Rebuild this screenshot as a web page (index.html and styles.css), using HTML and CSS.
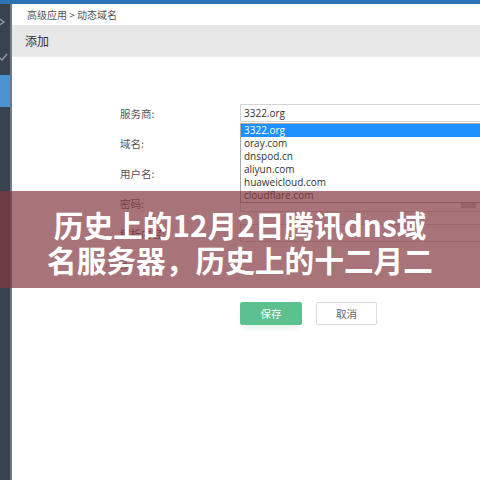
FILE: index.html
```html
<!DOCTYPE html>
<html lang="zh">
<head>
<meta charset="utf-8">
<title>动态域名</title>
<link rel="stylesheet" href="styles.css">
</head>
<body>
<div class="topbar"></div>
<div class="layout">
  <aside class="sidebar">
    <div class="nav-item">
      <svg class="nav-ico" width="10" height="12" viewBox="0 0 10 12"><path d="M-2 2 L4 6 L-2 10" fill="none" stroke="#9aa3ad" stroke-width="1.2"/></svg>
    </div>
    <div class="nav-item">
      <svg class="nav-ico" width="10" height="12" viewBox="0 0 10 12"><path d="M-1 5 L2 8 L7 2" fill="none" stroke="#9aa3ad" stroke-width="1.2"/></svg>
    </div>
    <div class="nav-item active"></div>
  </aside>
  <main class="main">
    <div class="crumb">高级应用 &gt; 动态域名</div>
    <div class="band">添加</div>
    <div class="form">
      <div class="row">
        <div class="label">服务商:</div>
        <div class="field select-wrap">
          <div class="input">3322.org</div>
          <ul class="dropdown">
            <li class="sel">3322.org</li>
            <li>oray.com</li>
            <li>dnspod.cn</li>
            <li>aliyun.com</li>
            <li>huaweicloud.com</li>
            <li>cloudflare.com</li>
          </ul>
        </div>
      </div>
      <div class="row">
        <div class="label">域名:</div>
        <div class="field"><div class="input"></div></div>
      </div>
      <div class="row">
        <div class="label">用户名:</div>
        <div class="field"><div class="input"></div></div>
      </div>
      <div class="row">
        <div class="label">密码:</div>
        <div class="field"><div class="input pwd"><span class="eye"></span></div></div>
      </div>
      <div class="row">
        <div class="label">解析内容:</div>
        <div class="field"><div class="input"></div></div>
      </div>
      <div class="row">
        <div class="label note-label">△ 已</div>
        <div class="field"></div>
      </div>
      <div class="actions">
        <button class="btn btn-save">保存</button>
        <button class="btn btn-cancel">取消</button>
      </div>
    </div>
  </main>
</div>
<div class="overlay">
  <h1 class="title">历史上的12月2日腾讯dns域<br>名服务器，历史上的十二月二</h1>
</div>
</body>
</html>
```
FILE: styles.css
```css
* { box-sizing: border-box; }
html, body {
  margin: 0;
  padding: 0;
  width: 480px;
  height: 480px;
  overflow: hidden;
  background: #ffffff;
  font-family: "Noto Sans CJK SC", "Open Sans", sans-serif;
}
.topbar {
  height: 4px;
  background: #2d72b3;
}
.layout {
  display: flex;
  height: 476px;
}
.sidebar {
  width: 12px;
  flex: none;
  background: #39434f;
  border-right: 2px solid #737a84;
  display: flex;
  flex-direction: column;
}
.nav-item {
  height: 36px;
  display: flex;
  align-items: center;
}
.nav-item:nth-child(2) { height: 35px; }
.nav-ico { display: block; }
.nav-item.active {
  height: 32px;
  background: #4a92d2;
}
.main {
  flex: 1;
  overflow: hidden;
  display: flex;
  flex-direction: column;
}
.crumb {
  height: 21px;
  line-height: 21px;
  padding-left: 15px;
  font-size: 10px;
  color: #555;
}
.band {
  height: 32px;
  line-height: 31px;
  padding-left: 13px;
  font-size: 12px;
  color: #333;
  background: #e7e7e7;
  border-bottom: 1px solid #efefef;
}
.form {
  padding-top: 41px;
  display: flex;
  flex-direction: column;
}
.row {
  height: 30px;
  display: flex;
  align-items: center;
}
.label {
  width: 228px;
  padding-left: 108px;
  font-size: 10.5px;
  color: #555;
  flex: none;
}
.field {
  flex: 1;
  margin-right: -3px;
  position: relative;
}
.input {
  height: 18px;
  border: 1px solid #d4d4d4;
  font-family: "Open Sans", "Noto Sans CJK SC", sans-serif;
  font-size: 10px;
  line-height: 16px;
  padding-left: 3px;
  color: #333;
  position: relative;
}
.pwd .eye {
  position: absolute;
  right: 6px;
  top: 3px;
  width: 15px;
  height: 10px;
  background: #c9c9c9;
  border-radius: 1px;
}
.note-label {
  padding-left: 93px;
  color: #666;
}
.dropdown {
  position: absolute;
  left: 0;
  right: 0;
  top: 19px;
  margin: 0;
  padding: 0;
  list-style: none;
  background: #fff;
  border: 1px solid #a9a9a9;
  font-family: "Open Sans", sans-serif;
  font-size: 10px;
  color: #333;
  z-index: 2;
}
.dropdown li {
  height: 13px;
  line-height: 13px;
  padding-left: 3px;
}
.dropdown li.sel {
  background: #1e90ff;
  color: #fff;
}
.actions {
  margin-top: 24px;
  padding-left: 228px;
  display: flex;
  gap: 14px;
}
.btn {
  width: 62px;
  height: 23px;
  font-family: "Noto Sans CJK SC", sans-serif;
  font-size: 10.5px;
  border-radius: 2px;
  padding: 0;
}
.btn-save {
  background: #5cc08f;
  border: 1px solid #5cc08f;
  color: #fff;
  box-shadow: 0 6px 6px -4px rgba(92, 192, 143, 0.25);
}
.btn-cancel {
  width: 61px;
  background: #fff;
  border: 1px solid #dcdcdc;
  color: #666;
}
.overlay {
  position: absolute;
  left: 0;
  right: 0;
  top: 191px;
  height: 97px;
  background: rgba(131, 56, 64, 0.7);
  display: flex;
  align-items: center;
  justify-content: center;
  z-index: 5;
}
.title {
  margin: 0;
  font-family: "Noto Sans CJK SC", sans-serif;
  font-weight: 700;
  font-size: 29.7px;
  line-height: 35px;
  color: #ffffff;
  text-align: center;
  padding-top: 5px;
}
```
